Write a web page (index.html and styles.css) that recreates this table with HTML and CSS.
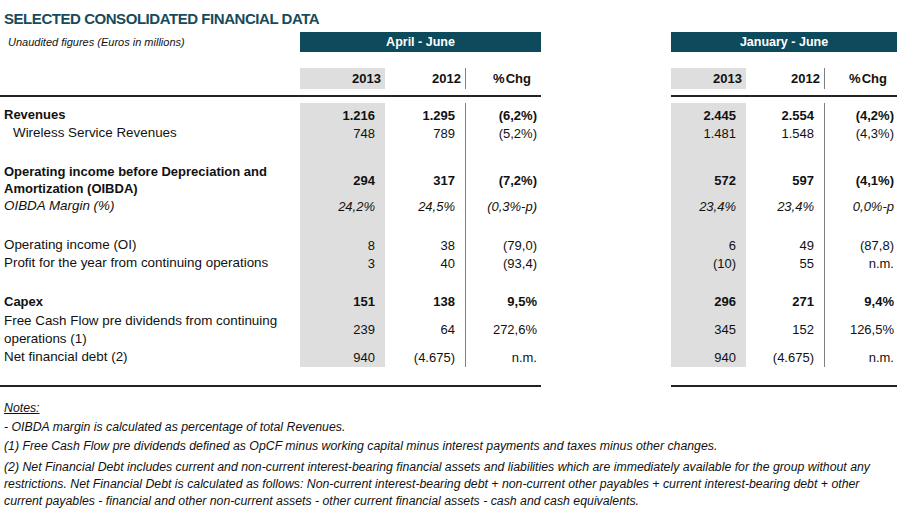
FILE: index.html
```html
<!DOCTYPE html>
<html lang="en">
<head>
<meta charset="utf-8">
<title>Selected Consolidated Financial Data</title>
<link rel="stylesheet" href="styles.css">
</head>
<body>
<div class="page">
  <h1 class="title">SELECTED CONSOLIDATED FINANCIAL DATA</h1>

  <div class="grid bars">
    <div class="subtitle">Unaudited figures (Euros in millions)</div>
    <div class="bar bar-a">April - June</div>
    <div class="bar bar-b">January - June</div>
  </div>

  <div class="grid head">
    <div class="lbl"></div>
    <div class="c c1 g">2013</div>
    <div class="c c2">2012</div>
    <div class="c c3 vl">%&#8202;Chg</div>
    <div class="gap"></div>
    <div class="c c4 g">2013</div>
    <div class="c c5">2012</div>
    <div class="c c6 vl">%&#8202;Chg</div>
  </div>

  <div class="grid rule top-rule">
    <div class="rule-l"></div>
    <div class="rule-r"></div>
  </div>

  <div class="data">
    <div class="grid row h3">
      <div class="lbl"></div><div class="c c1 g"></div><div class="c c2"></div><div class="c c3 vl"></div>
      <div class="gap"></div><div class="c c4 g"></div><div class="c c5"></div><div class="c c6 vl"></div>
    </div>
    <div class="grid row h18 bold">
      <div class="lbl">Revenues</div><div class="c c1 g">1.216</div><div class="c c2">1.295</div><div class="c c3 vl">(6,2%)</div>
      <div class="gap"></div><div class="c c4 g">2.445</div><div class="c c5">2.554</div><div class="c c6 vl">(4,2%)</div>
    </div>
    <div class="grid row h18">
      <div class="lbl indent">Wireless Service Revenues</div><div class="c c1 g">748</div><div class="c c2">789</div><div class="c c3 vl">(5,2%)</div>
      <div class="gap"></div><div class="c c4 g">1.481</div><div class="c c5">1.548</div><div class="c c6 vl">(4,3%)</div>
    </div>
    <div class="grid row h21">
      <div class="lbl"></div><div class="c c1 g"></div><div class="c c2"></div><div class="c c3 vl"></div>
      <div class="gap"></div><div class="c c4 g"></div><div class="c c5"></div><div class="c c6 vl"></div>
    </div>
    <div class="grid row h34 bold">
      <div class="lbl two">Operating income before Depreciation and<br>Amortization (OIBDA)</div><div class="c c1 g">294</div><div class="c c2">317</div><div class="c c3 vl">(7,2%)</div>
      <div class="gap"></div><div class="c c4 g">572</div><div class="c c5">597</div><div class="c c6 vl">(4,1%)</div>
    </div>
    <div class="grid row h16 ital">
      <div class="lbl">OIBDA Margin (%)</div><div class="c c1 g">24,2%</div><div class="c c2">24,5%</div><div class="c c3 vl">(0,3%-p)</div>
      <div class="gap"></div><div class="c c4 g">23,4%</div><div class="c c5">23,4%</div><div class="c c6 vl">0,0%-p</div>
    </div>
    <div class="grid row h23">
      <div class="lbl"></div><div class="c c1 g"></div><div class="c c2"></div><div class="c c3 vl"></div>
      <div class="gap"></div><div class="c c4 g"></div><div class="c c5"></div><div class="c c6 vl"></div>
    </div>
    <div class="grid row h18">
      <div class="lbl">Operating income (OI)</div><div class="c c1 g">8</div><div class="c c2">38</div><div class="c c3 vl">(79,0)</div>
      <div class="gap"></div><div class="c c4 g">6</div><div class="c c5">49</div><div class="c c6 vl">(87,8)</div>
    </div>
    <div class="grid row h18">
      <div class="lbl">Profit for the year from continuing operations</div><div class="c c1 g">3</div><div class="c c2">40</div><div class="c c3 vl">(93,4)</div>
      <div class="gap"></div><div class="c c4 g">(10)</div><div class="c c5">55</div><div class="c c6 vl">n.m.</div>
    </div>
    <div class="grid row h20">
      <div class="lbl"></div><div class="c c1 g"></div><div class="c c2"></div><div class="c c3 vl"></div>
      <div class="gap"></div><div class="c c4 g"></div><div class="c c5"></div><div class="c c6 vl"></div>
    </div>
    <div class="grid row h19 bold">
      <div class="lbl">Capex</div><div class="c c1 g">151</div><div class="c c2">138</div><div class="c c3 vl">9,5%</div>
      <div class="gap"></div><div class="c c4 g">296</div><div class="c c5">271</div><div class="c c6 vl">9,4%</div>
    </div>
    <div class="grid row h37">
      <div class="lbl">Free Cash Flow pre dividends from continuing<br>operations (1)</div><div class="c c1 g">239</div><div class="c c2">64</div><div class="c c3 vl">272,6%</div>
      <div class="gap"></div><div class="c c4 g">345</div><div class="c c5">152</div><div class="c c6 vl">126,5%</div>
    </div>
    <div class="grid row h18">
      <div class="lbl">Net financial debt (2)</div><div class="c c1 g">940</div><div class="c c2">(4.675)</div><div class="c c3 vl">n.m.</div>
      <div class="gap"></div><div class="c c4 g">940</div><div class="c c5">(4.675)</div><div class="c c6 vl">n.m.</div>
    </div>
    <div class="grid row h1">
      <div class="lbl"></div><div class="c c1 g"></div><div class="c c2"></div><div class="c c3 vl"></div>
      <div class="gap"></div><div class="c c4 g"></div><div class="c c5"></div><div class="c c6 vl"></div>
    </div>
  </div>

  <div class="grid rule bottom-rule">
    <div class="rule-l"></div>
    <div class="rule-r"></div>
  </div>

  <div class="notes">
    <p class="notes-head"><span>Notes:</span></p>
    <p>- OIBDA margin is calculated as percentage of total Revenues.</p>
    <p>(1) Free Cash Flow pre dividends defined as OpCF minus working capital minus interest payments and taxes minus other changes.</p>
    <p class="long">(2) Net Financial Debt includes current and non-current interest-bearing financial assets and liabilities which are immediately available for the group without any<br>restrictions. Net Financial Debt is calculated as follows: Non-current interest-bearing debt + non-current other payables + current interest-bearing debt + other<br>current payables - financial and other non-current assets - other current financial assets - cash and cash equivalents.</p>
  </div>
</div>
</body>
</html>
```

FILE: styles.css
```css
* { box-sizing: border-box; }
html, body { margin: 0; padding: 0; background: #ffffff; }
body {
  font-family: "Liberation Sans", Arial, sans-serif;
  color: #111111;
  width: 900px;
  height: 519px;
  overflow: hidden;
}
.page { width: 900px; }

.title {
  margin: 0 0 3px 0;
  padding: 9px 0 0 4px;
  height: 32px;
  font-size: 15px;
  line-height: 20px;
  font-weight: bold;
  color: #184a5b;
  letter-spacing: -0.45px;
}

.grid {
  display: grid;
  grid-template-columns: 300px 85px 80px 76px 130px 75px 78px 73px;
}

.bars { height: 20px; margin-top: -3px; }
.subtitle {
  grid-column: 1 / 2;
  font-size: 11px;
  font-style: italic;
  line-height: 20px;
  padding-left: 8px;
  color: #111;
}
.bar {
  background: #0d4a5b;
  color: #ffffff;
  font-weight: bold;
  font-size: 12.5px;
  line-height: 20px;
  text-align: center;
}
.bar-a { grid-column: 2 / 5; }
.bar-b { grid-column: 6 / 9; }

.head {
  margin-top: 16px;
  height: 21px;
  font-weight: bold;
  font-size: 13px;
}
.head .c { padding-right: 4px; }
.head .c3, .head .c6 { padding-right: 10px; }

.c {
  display: flex;
  align-items: center;
  justify-content: flex-end;
  font-size: 13px;
  white-space: nowrap;
}
.g { background: #dedede; }
.vl { border-left: 1px solid #808080; }

.rule { height: 2px; }
.top-rule { margin-top: 6px; margin-bottom: 6px; }
.bottom-rule { margin-top: 18px; }
.rule-l { grid-column: 1 / 5; background: #222222; }
.rule-r { grid-column: 6 / 9; background: #222222; }

.row .lbl {
  display: flex;
  align-items: center;
  padding-left: 4px;
  font-size: 13.4px;
  line-height: 18px;
  white-space: nowrap;
}
.row.bold .lbl { font-size: 13px; }
.row .lbl.indent { padding-left: 13px; }
.row .lbl.two { line-height: 17px; }
.row .c1, .row .c2, .row .c4, .row .c5 { padding-right: 10px; }
.row .c3 { padding-right: 4px; }
.row .c6 { padding-right: 3px; }

.bold { font-weight: bold; }
.ital { font-style: italic; }

.h1 { height: 1px; }
.h3 { height: 3px; }
.h16 { height: 16px; }
.h18 { height: 18px; }
.h19 { height: 19px; }
.h20 { height: 20px; }
.h21 { height: 21px; }
.h23 { height: 23px; }
.h34 { height: 34px; }
.h37 { height: 37px; }

.notes {
  padding: 13px 0 0 4px;
  font-size: 12.3px;
  font-style: italic;
  line-height: 16px;
  color: #111;
}
.notes p { margin: 0 0 3px 0; white-space: nowrap; }
.notes .notes-head { font-size: 12.3px; }
.notes .notes-head span { text-decoration: underline; }
.notes .long { line-height: 17px; margin-top: 5px; }
```
